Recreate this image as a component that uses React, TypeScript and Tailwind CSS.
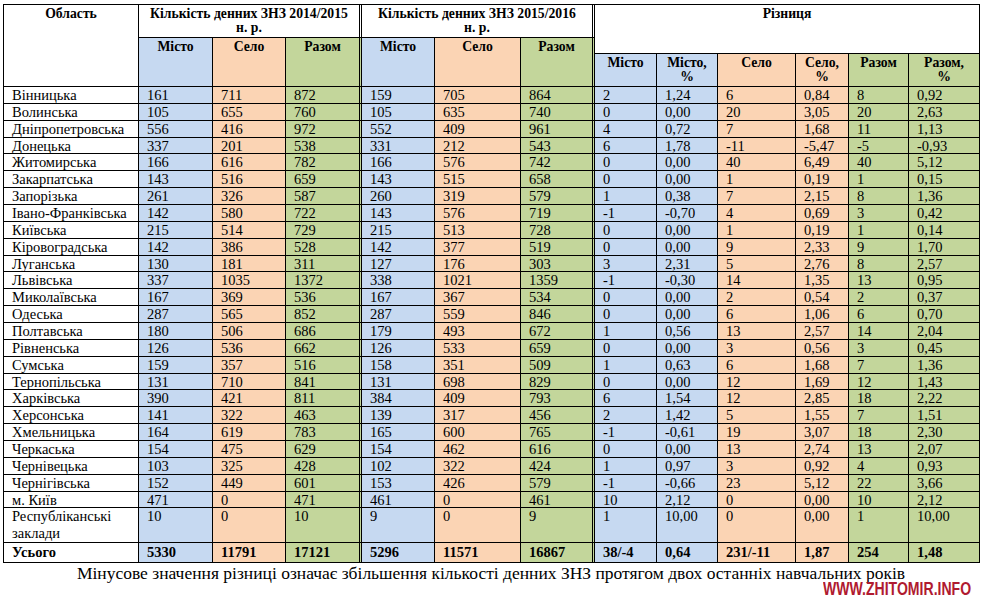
import React from "react";

type Row = [string, ...string[]];

const rows: Row[] = [
  ["Вінницька", "161", "711", "872", "159", "705", "864", "2", "1,24", "6", "0,84", "8", "0,92"],
  ["Волинська", "105", "655", "760", "105", "635", "740", "0", "0,00", "20", "3,05", "20", "2,63"],
  ["Дніпропетровська", "556", "416", "972", "552", "409", "961", "4", "0,72", "7", "1,68", "11", "1,13"],
  ["Донецька", "337", "201", "538", "331", "212", "543", "6", "1,78", "-11", "-5,47", "-5", "-0,93"],
  ["Житомирська", "166", "616", "782", "166", "576", "742", "0", "0,00", "40", "6,49", "40", "5,12"],
  ["Закарпатська", "143", "516", "659", "143", "515", "658", "0", "0,00", "1", "0,19", "1", "0,15"],
  ["Запорізька", "261", "326", "587", "260", "319", "579", "1", "0,38", "7", "2,15", "8", "1,36"],
  ["Івано-Франківська", "142", "580", "722", "143", "576", "719", "-1", "-0,70", "4", "0,69", "3", "0,42"],
  ["Київська", "215", "514", "729", "215", "513", "728", "0", "0,00", "1", "0,19", "1", "0,14"],
  ["Кіровоградська", "142", "386", "528", "142", "377", "519", "0", "0,00", "9", "2,33", "9", "1,70"],
  ["Луганська", "130", "181", "311", "127", "176", "303", "3", "2,31", "5", "2,76", "8", "2,57"],
  ["Львівська", "337", "1035", "1372", "338", "1021", "1359", "-1", "-0,30", "14", "1,35", "13", "0,95"],
  ["Миколаївська", "167", "369", "536", "167", "367", "534", "0", "0,00", "2", "0,54", "2", "0,37"],
  ["Одеська", "287", "565", "852", "287", "559", "846", "0", "0,00", "6", "1,06", "6", "0,70"],
  ["Полтавська", "180", "506", "686", "179", "493", "672", "1", "0,56", "13", "2,57", "14", "2,04"],
  ["Рівненська", "126", "536", "662", "126", "533", "659", "0", "0,00", "3", "0,56", "3", "0,45"],
  ["Сумська", "159", "357", "516", "158", "351", "509", "1", "0,63", "6", "1,68", "7", "1,36"],
  ["Тернопільська", "131", "710", "841", "131", "698", "829", "0", "0,00", "12", "1,69", "12", "1,43"],
  ["Харківська", "390", "421", "811", "384", "409", "793", "6", "1,54", "12", "2,85", "18", "2,22"],
  ["Херсонська", "141", "322", "463", "139", "317", "456", "2", "1,42", "5", "1,55", "7", "1,51"],
  ["Хмельницька", "164", "619", "783", "165", "600", "765", "-1", "-0,61", "19", "3,07", "18", "2,30"],
  ["Черкаська", "154", "475", "629", "154", "462", "616", "0", "0,00", "13", "2,74", "13", "2,07"],
  ["Чернівецька", "103", "325", "428", "102", "322", "424", "1", "0,97", "3", "0,92", "4", "0,93"],
  ["Чернігівська", "152", "449", "601", "153", "426", "579", "-1", "-0,66", "23", "5,12", "22", "3,66"],
  ["м. Київ", "471", "0", "471", "461", "0", "461", "10", "2,12", "0", "0,00", "10", "2,12"],
  ["Республіканські заклади", "10", "0", "10", "9", "0", "9", "1", "10,00", "0", "0,00", "1", "10,00"],
];

const total: Row = ["Усього", "5330", "11791", "17121", "5296", "11571", "16867", "38/-4", "0,64", "231/-11", "1,87", "254", "1,48"];

const BLUE = "bg-[#c6d9f1]";
const ORANGE = "bg-[#fbd4b4]";
const GREEN = "bg-[#c3d69b]";

const colBg = [
  "bg-white",
  BLUE,
  ORANGE,
  GREEN,
  BLUE,
  ORANGE,
  GREEN,
  BLUE,
  BLUE,
  ORANGE,
  ORANGE,
  GREEN,
  GREEN,
];

const cellBase = "border-r border-b border-black";
const dbl = "border-r-[3px] border-double";

function isDouble(i: number) {
  return i === 3 || i === 6;
}

const head = "text-center font-bold text-[13.7px] leading-[14px] pt-[2px]";

export default function App() {
  return (
    <div className="relative w-[982px] h-[603px] overflow-hidden bg-white pl-[3px] pt-[4px] text-black font-[family-name:Liberation_Serif,serif]">
      <div className="grid w-[977px] grid-cols-[135px_74px_73px_76px_73px_86px_74px_62px_61px_78px_53px_60px_71px] grid-rows-[33px_16px_33px_repeat(25,16.86px)_35px_20px] border-l border-t border-black">
        {/* header row 1 */}
        <div className={`${cellBase} ${head} row-span-3 bg-white`}>Область</div>
        <div className={`${cellBase} ${dbl} ${head} col-span-3 bg-white`}>
          Кількість денних ЗНЗ 2014/2015
          <br />
          н. р.
        </div>
        <div className={`${cellBase} ${dbl} ${head} col-span-3 bg-white`}>
          Кількість денних ЗНЗ 2015/2016
          <br />
          н. р.
        </div>
        <div className={`${cellBase} ${head} col-span-6 row-span-2 bg-white`}>Різниця</div>
        {/* header row 2 (groups 1 and 2) */}
        <div className={`${cellBase} ${head} row-span-2 ${BLUE}`}>Місто</div>
        <div className={`${cellBase} ${head} row-span-2 ${ORANGE}`}>Село</div>
        <div className={`${cellBase} ${dbl} ${head} row-span-2 ${GREEN}`}>Разом</div>
        <div className={`${cellBase} ${head} row-span-2 ${BLUE}`}>Місто</div>
        <div className={`${cellBase} ${head} row-span-2 ${ORANGE}`}>Село</div>
        <div className={`${cellBase} ${dbl} ${head} row-span-2 ${GREEN}`}>Разом</div>
        {/* header row 3 (difference) */}
        <div className={`${cellBase} ${head} ${BLUE}`}>Місто</div>
        <div className={`${cellBase} ${head} ${BLUE}`}>
          Місто,
          <br />%
        </div>
        <div className={`${cellBase} ${head} ${ORANGE}`}>Село</div>
        <div className={`${cellBase} ${head} ${ORANGE}`}>
          Село,
          <br />%
        </div>
        <div className={`${cellBase} ${head} ${GREEN}`}>Разом</div>
        <div className={`${cellBase} ${head} ${GREEN}`}>
          Разом,
          <br />%
        </div>

        {rows.map((r, ri) =>
          r.map((v, i) => (
            <div
              key={`${ri}-${i}`}
              className={`${cellBase} ${isDouble(i) ? dbl : ""} ${colBg[i]} pl-[8px] text-[14.5px] leading-[17px]`}
            >
              {v}
            </div>
          ))
        )}
        {total.map((v, i) => (
          <div
            key={`t-${i}`}
            className={`${cellBase} ${isDouble(i) ? dbl : ""} ${colBg[i]} pl-[8px] pt-[1px] text-[14.5px] leading-[17px] font-bold`}
          >
            {v}
          </div>
        ))}
      </div>
      <div className="-ml-[3px] text-center text-[17.5px] leading-[20px]">
        Мінусове значення різниці означає збільшення кількості денних ЗНЗ протягом двох останніх навчальних років
      </div>
      <div className="absolute left-[823px] top-[579px] origin-left scale-x-[0.74] whitespace-nowrap font-[family-name:Liberation_Sans,Arial,sans-serif] text-[19px] font-bold leading-[19px] text-[#b01a30]">
        WWW.ZHITOMIR.INFO
      </div>
    </div>
  );
}
